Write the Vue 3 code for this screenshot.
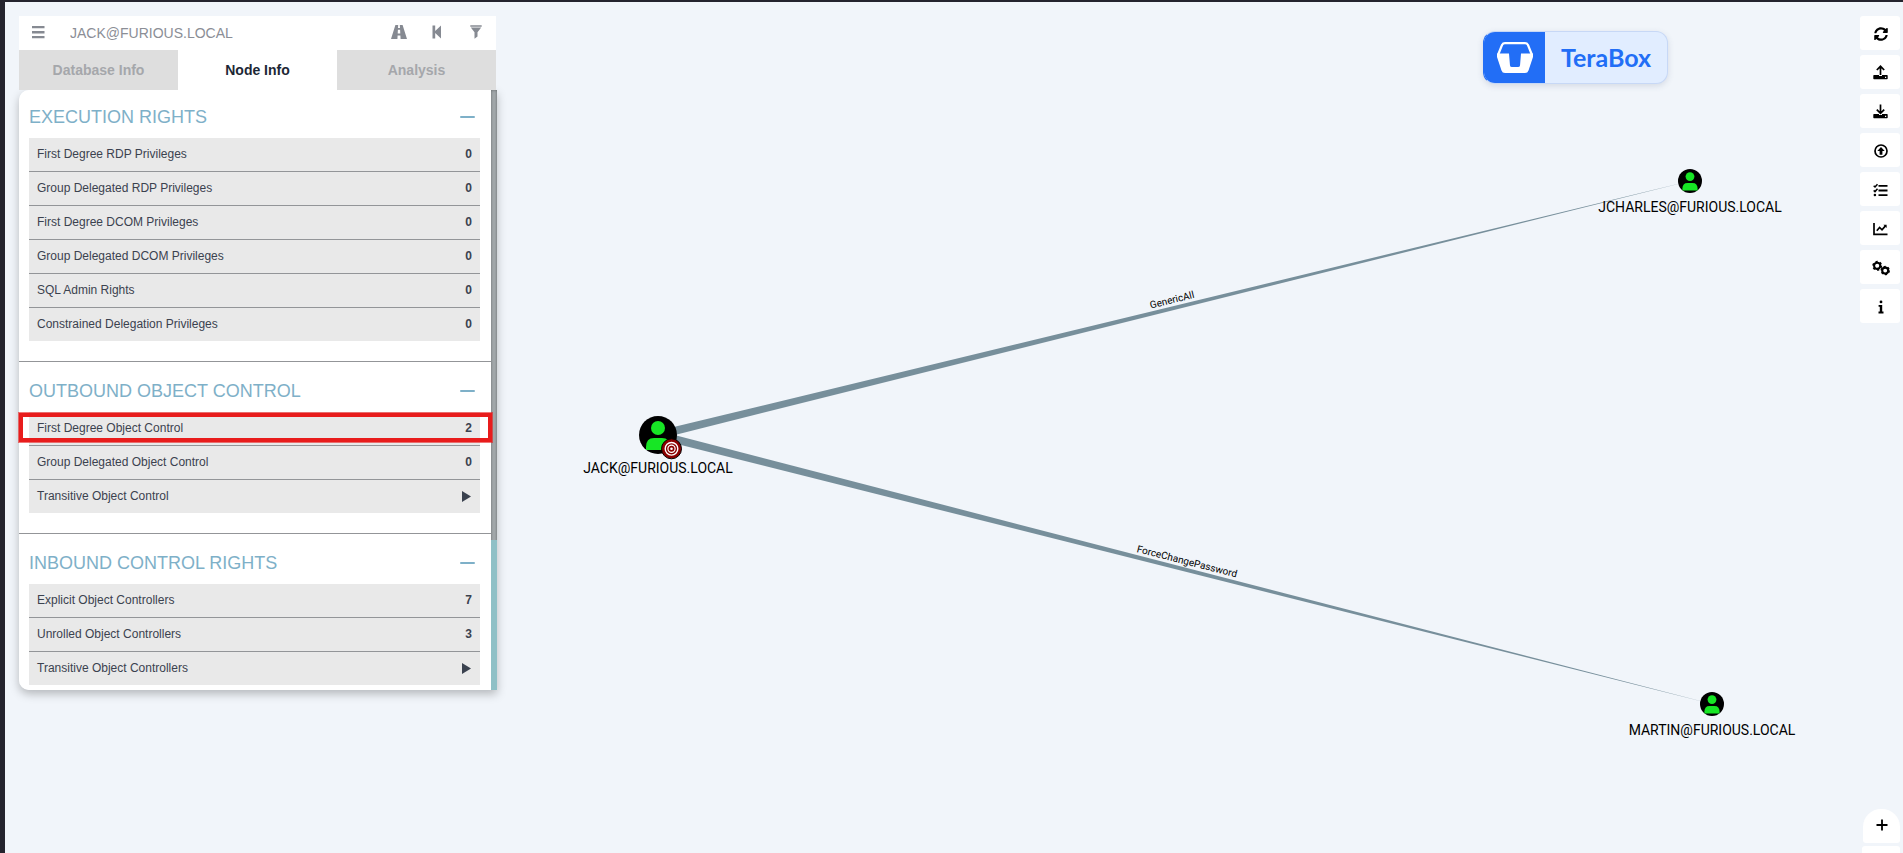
<script setup>
const sections = [
  {
    title: 'EXECUTION RIGHTS',
    rows: [
      { label: 'First Degree RDP Privileges', value: 0 },
      { label: 'Group Delegated RDP Privileges', value: 0 },
      { label: 'First Degree DCOM Privileges', value: 0 },
      { label: 'Group Delegated DCOM Privileges', value: 0 },
      { label: 'SQL Admin Rights', value: 0 },
      { label: 'Constrained Delegation Privileges', value: 0 },
    ],
  },
  {
    title: 'OUTBOUND OBJECT CONTROL',
    rows: [
      { label: 'First Degree Object Control', value: 2, marked: true },
      { label: 'Group Delegated Object Control', value: 0 },
      { label: 'Transitive Object Control' },
    ],
  },
  {
    title: 'INBOUND CONTROL RIGHTS',
    rows: [
      { label: 'Explicit Object Controllers', value: 7 },
      { label: 'Unrolled Object Controllers', value: 3 },
      { label: 'Transitive Object Controllers' },
    ],
  },
]

const tabs = ['Database Info', 'Node Info', 'Analysis']
const tools = ['Refresh', 'Export Graph', 'Import Graph', 'Upload Data', 'View Upload Status', 'Change Layout Type', 'Settings', 'About']

const nodes = [
  { name: 'JACK@FURIOUS.LOCAL', x: 658, y: 435, r: 19, label: 38 },
  { name: 'JCHARLES@FURIOUS.LOCAL', x: 1690, y: 181, r: 12, label: 31 },
  { name: 'MARTIN@FURIOUS.LOCAL', x: 1712, y: 704, r: 12, label: 31 },
]
const source = nodes[0]

// Edges taper from the source node down to a point at the target.
function makeEdge(name, target) {
  const dx = target.x - source.x
  const dy = target.y - source.y
  const len = Math.hypot(dx, dy)
  const nx = (-dy / len) * 4
  const ny = (dx / len) * 4
  return {
    name,
    points: `${source.x + nx},${source.y + ny} ${source.x - nx},${source.y - ny} ${target.x},${target.y}`,
    transform: `translate(${source.x + dx / 2} ${source.y + dy / 2}) rotate(${(Math.atan2(dy, dx) * 180) / Math.PI})`,
  }
}
const edges = [makeEdge('GenericAll', nodes[1]), makeEdge('ForceChangePassword', nodes[2])]
</script>

<template>
  <main class="app">
    <svg class="graph" role="img" aria-label="Attack path graph">
      <g v-for="e in edges" :key="e.name">
        <polygon :points="e.points" fill="#778f9b" />
        <text class="edge-label" :transform="e.transform" y="-5">{{ e.name }}</text>
      </g>
      <g v-for="n in nodes" :key="n.name" :transform="`translate(${n.x} ${n.y})`">
        <g :transform="`scale(${n.r / 19})`">
          <circle r="19" fill="#000" />
          <circle cy="-7" r="7" fill="#17e625" />
          <path d="M-12 15V12Q-12 3 -4 3H4Q12 3 12 12V15Z" fill="#17e625" />
        </g>
        <text class="node-label" :y="n.label">{{ n.name }}</text>
      </g>
      <g transform="translate(671.5 448.8)">
        <circle r="10" fill="#8b0000" stroke="#000" stroke-width="1" />
        <circle r="6.3" fill="none" stroke="#fff" stroke-width="1.4" />
        <circle r="3.6" fill="none" stroke="#fff" stroke-width="1.2" />
        <circle r="1.3" fill="#fff" />
      </g>
    </svg>

    <aside class="panel">
      <form class="search" @submit.prevent>
        <button type="button" aria-label="More info">
          <svg width="13" height="13" viewBox="0 0 13 13"><path d="M0 0h12.5v2.3H0zM0 5.1h12.5v2.3H0zM0 10h12.5v2.3H0z" /></svg>
        </button>
        <input type="text" value="JACK@FURIOUS.LOCAL" aria-label="Search for a node" />
        <button type="button" aria-label="Pathfinding">
          <svg width="16" height="14" viewBox="0 0 16 14"><path fill-rule="evenodd" d="M4.4 0H7.2L7 3H9L8.8 0H11.6L16 14H9.6L9.4 10.5H6.6L6.4 14H0ZM6.9 4.8 6.7 8.5H9.3L9.1 4.8Z" /></svg>
        </button>
        <button type="button" aria-label="Back">
          <svg width="11" height="14" viewBox="0 0 11 14"><path d="M0.5 0.5H3.2V6L9 0.5V13.5L3.2 8V13.5H0.5Z" /></svg>
        </button>
        <button type="button" aria-label="Filter">
          <svg width="13" height="14" viewBox="0 0 13 14"><path d="M0.3 0.3H11.7V1.8H0.3ZM0.8 2.6H11.2L7.5 7.2V11.4L4.5 13.7V7.2Z" /></svg>
        </button>
      </form>

      <nav class="tabs" role="tablist">
        <button v-for="t in tabs" :key="t" type="button" role="tab" :class="{ active: t === 'Node Info' }" :aria-selected="t === 'Node Info'">{{ t }}</button>
      </nav>

      <div class="content">
        <div class="scroller">
          <section v-for="s in sections" :key="s.title" class="section">
            <header>
              <h2>{{ s.title }}</h2>
              <button type="button" class="collapse" :aria-label="`Collapse ${s.title}`"></button>
            </header>
            <table>
              <tbody>
                <tr v-for="r in s.rows" :key="r.label">
                  <th scope="row">{{ r.label }}</th>
                  <td>
                    <template v-if="r.value !== undefined">{{ r.value }}</template>
                    <button v-else type="button" class="play" :aria-label="`Run ${r.label}`">
                      <svg width="9" height="12" viewBox="0 0 9 12"><path d="M0 0 9 5.5 0 11Z" /></svg>
                    </button>
                    <span v-if="r.marked" class="marker"></span>
                  </td>
                </tr>
              </tbody>
            </table>
          </section>
        </div>
        <div class="track"><div class="thumb"></div></div>
      </div>
    </aside>

    <a class="terabox" href="#">
      <span class="terabox-mark">
        <svg width="36" height="32" viewBox="0 0 36 32">
          <path d="M1.2 12.5 5 3Q6 1.2 8 1.2H28Q30 1.2 31 3L34.8 12.5" fill="none" stroke="#fff" stroke-width="2.2" />
          <path d="M0 11.5H12L13 23.5Q13.2 25 15 25H21Q22.8 25 23 23.5L24 11.5H36V15L31.5 28.5Q30.7 31 28 31H8Q5.3 31 4.5 28.5L0 15Z" fill="#fff" />
        </svg>
      </span>
      <span class="terabox-name">TeraBox</span>
    </a>

    <div class="tools">
      <button v-for="(t, i) in tools" :key="t" type="button" :aria-label="t">
        <svg v-if="i === 0" width="14" height="14" viewBox="0 0 512 512"><path d="M370.72 133.28C339.458 104.008 298.888 87.962 255.848 88c-77.458.068-144.328 53.178-162.791 126.85-1.344 5.363-6.122 9.15-11.651 9.15H24.103c-7.498 0-13.194-6.807-11.807-14.176C33.933 94.924 134.813 8 256 8c66.448 0 126.791 26.136 171.315 68.685L463.03 40.97C478.149 25.851 504 36.559 504 57.941V192c0 13.255-10.745 24-24 24H345.941c-21.382 0-32.09-25.851-16.971-40.971l41.75-41.749zM32 296h134.059c21.382 0 32.09 25.851 16.971 40.971l-41.75 41.75c31.262 29.273 71.835 45.319 114.876 45.28 77.418-.07 144.315-53.144 162.787-126.849 1.344-5.363 6.122-9.15 11.651-9.15h57.304c7.498 0 13.194 6.807 11.807 14.176C478.067 417.076 377.187 504 256 504c-66.448 0-126.791-26.136-171.315-68.685L48.97 471.03C33.851 486.149 8 475.441 8 454.059V320c0-13.255 10.745-24 24-24z" /></svg>
        <svg v-else-if="i === 1 || i === 2" width="15" height="15" viewBox="0 0 15 15">
          <path fill-rule="evenodd" d="M1 10H6V11H9V10H14Q14.7 10 14.7 10.7V13.6Q14.7 14.3 14 14.3H1Q.3 14.3 .3 13.6V10.7Q.3 10 1 10ZM12 11.7V12.9H13.2V11.7Z" />
          <path v-if="i === 1" d="M7.5 10V1.5M3.8 5 7.5 1.3 11.2 5" class="line" />
          <path v-else d="M7.5 .5V9M3.8 5.7 7.5 9.4 11.2 5.7" class="line" />
        </svg>
        <svg v-else-if="i === 3" width="14" height="14" viewBox="0 0 14 14"><circle cx="7" cy="7" r="6" class="line" /><path d="M7 3 10.7 7H8.4V10.7H5.6V7H3.3Z" /></svg>
        <svg v-else-if="i === 4" width="15" height="14" viewBox="0 0 15 14"><path d="M.7 2.8 2 4 4.5 1.2M.7 7.4 2 8.6 4.5 5.8" fill="none" stroke="#000" stroke-width="1.5" /><circle cx="1.9" cy="12" r="1.3" /><path d="M5.5 2H14.5V3.8H5.5ZM5.5 6.6H14.5V8.4H5.5ZM5.5 11.2H14.5V13H5.5Z" /></svg>
        <svg v-else-if="i === 5" width="15" height="14" viewBox="0 0 15 14"><path d="M1 1V12.4H14.5M3.8 8.8 6.6 5.5 9 7.8 12.7 3.6" class="line" /><path d="M10.4 2.7H13.6V5.9Z" /></svg>
        <svg v-else-if="i === 6" width="18" height="16" viewBox="0 0 18 16">
          <g fill="none" stroke="#000">
            <circle cx="5.2" cy="5.8" r="3.1" stroke-width="2.1" />
            <circle cx="5.2" cy="5.8" r="4.2" stroke-width="1.6" stroke-dasharray="2.2" />
            <circle cx="13.2" cy="10.6" r="3" stroke-width="2.1" />
            <circle cx="13.2" cy="10.6" r="4" stroke-width="1.5" stroke-dasharray="2.1" />
          </g>
        </svg>
        <svg v-else width="6" height="14" viewBox="0 0 6 14"><circle cx="3" cy="1.9" r="1.4" /><path d="M.6 5H4.2V11.6H5.5V13.4H.5V11.6H1.8V6.8H.6Z" /></svg>
      </button>
    </div>

    <div class="zoom">
      <button type="button" class="zoom-in" aria-label="Zoom in">
        <svg width="12" height="12" viewBox="0 0 12 12"><path d="M5.1 0.5H6.9V5.1H11.5V6.9H6.9V11.5H5.1V6.9H.5V5.1H5.1Z" /></svg>
      </button>
      <button type="button" aria-label="Reset zoom"></button>
    </div>
  </main>
</template>

<style>
body {
  margin: 0;
}
</style>

<style scoped>
.app {
  position: relative;
  box-sizing: border-box;
  height: 100vh;
  overflow: hidden;
  display: flex;
  align-items: flex-start;
  padding: 14px 3px 0 14px;
  border-top: 2px solid #24242e;
  border-left: 5px solid #24242e;
  background: #f1f5fa;
  font-family: "Liberation Sans", Arial, sans-serif;
}
button {
  margin: 0;
  padding: 0;
  border: 0;
  background: none;
  font: inherit;
  color: inherit;
  cursor: pointer;
}
svg {
  display: block;
}
.graph {
  position: absolute;
  top: -2px;
  left: -5px;
  width: calc(100% + 5px);
  height: calc(100% + 2px);
}
.node-label,
.edge-label {
  font-family: Roboto, sans-serif;
  text-anchor: middle;
  fill: #000;
}
.node-label {
  font-size: 14px;
}
.edge-label {
  font-size: 10px;
}
.panel {
  position: relative;
  width: 478px;
}
.search {
  display: flex;
  height: 34px;
  margin-right: 1px;
  background: #fff;
}
.search button {
  display: grid;
  place-items: center;
  width: 39px;
  padding-bottom: 2px;
  fill: #868a92;
}
.search input {
  flex: 1;
  min-width: 0;
  padding: 0 12px;
  border: 0;
  background: none;
  font: 14px "Liberation Sans", Arial, sans-serif;
  color: #8b8e96;
}
.tabs {
  display: flex;
  margin-right: 1px;
}
.tabs button {
  flex: 1;
  height: 40px;
  background: #dedede;
  font-size: 14px;
  font-weight: bold;
  color: #a5a7ab;
}
.tabs .active {
  background: #fff;
  color: #1d2735;
}
.content {
  display: flex;
  border-radius: 10px 0 0 10px;
  box-shadow: 0 4px 10px rgba(0, 0, 0, 0.25);
}
.scroller {
  flex: 1;
  padding-bottom: 5px;
  border-radius: 10px 0 0 10px;
  background: #fff;
}
.section {
  padding-bottom: 20px;
  border-bottom: 1px solid #939598;
}
.section:last-child {
  padding-bottom: 0;
  border: 0;
}
.section header {
  display: flex;
  align-items: center;
  justify-content: space-between;
  height: 42px;
  padding: 8px 16px 0 10px;
}
.section:first-child header {
  padding-top: 6px;
}
h2 {
  margin: 0;
  font-size: 18px;
  font-weight: normal;
  color: #7eb0c8;
}
.collapse {
  width: 15px;
  height: 2px;
  border-radius: 1px;
  background: #7eb0c8;
}
table {
  width: calc(100% - 21px);
  margin: 0 11px 0 10px;
  border-spacing: 0;
  font-size: 12px;
  color: #3b424f;
}
tr {
  position: relative;
}
th,
td {
  box-sizing: border-box;
  height: 34px;
  padding: 0 8px 1px;
  border-bottom: 1px solid #939598;
  background: #e9e9e9;
}
tr:last-child th,
tr:last-child td {
  height: 33px;
  border: 0;
}
th {
  font-weight: normal;
  text-align: left;
}
td {
  font-weight: bold;
  text-align: right;
}
.play {
  display: inline-block;
  margin-right: 1px;
  vertical-align: middle;
  fill: #3b424f;
}
.marker {
  position: absolute;
  inset: 1px -12px 4px -10px;
  border: 4px solid #e81c1c;
  box-shadow: 0 0 0 1px rgba(232, 28, 28, 0.6);
}
.track {
  display: flex;
  flex-direction: column;
  justify-content: flex-end;
  width: 6px;
  background: #a2a8ab;
  box-shadow: inset 0 0 3px rgba(0, 0, 0, 0.4);
}
.thumb {
  height: 25%;
  background: #8fc0c6;
}
.terabox {
  position: relative;
  display: flex;
  box-sizing: border-box;
  height: 53px;
  width: 185px;
  margin: 15px 192px 0 auto;
  border: 1px solid #c7d8f6;
  border-left-color: #226ef6;
  border-radius: 12px;
  overflow: hidden;
  background: #e1edff;
  box-shadow: 0 2px 6px rgba(60, 80, 120, 0.16);
  text-decoration: none;
}
.terabox-mark {
  display: grid;
  place-items: center;
  width: 61px;
  background: #226ef6;
}
.terabox-name {
  flex: 1;
  align-self: center;
  padding-bottom: 2px;
  font: bold 25px Lato, sans-serif;
  text-align: center;
  color: #226ef6;
}
.tools {
  position: relative;
  display: grid;
  gap: 5px;
}
.tools button {
  display: grid;
  place-items: center;
  width: 40px;
  height: 34px;
  padding-top: 1px;
  padding-left: 1px;
  border-radius: 3px;
  background: #fff;
}
.line {
  fill: none;
  stroke: #000;
  stroke-width: 1.7;
}
.zoom {
  position: absolute;
  right: 3px;
  bottom: -27px;
  display: grid;
  gap: 3px;
  justify-items: end;
}
.zoom button {
  display: grid;
  place-items: center;
  width: 38px;
  height: 34px;
  padding-bottom: 2px;
  border-radius: 3px;
  background: #fff;
}
.zoom .zoom-in {
  width: 37px;
  border-radius: 18px 18px 3px 3px;
}
</style>
